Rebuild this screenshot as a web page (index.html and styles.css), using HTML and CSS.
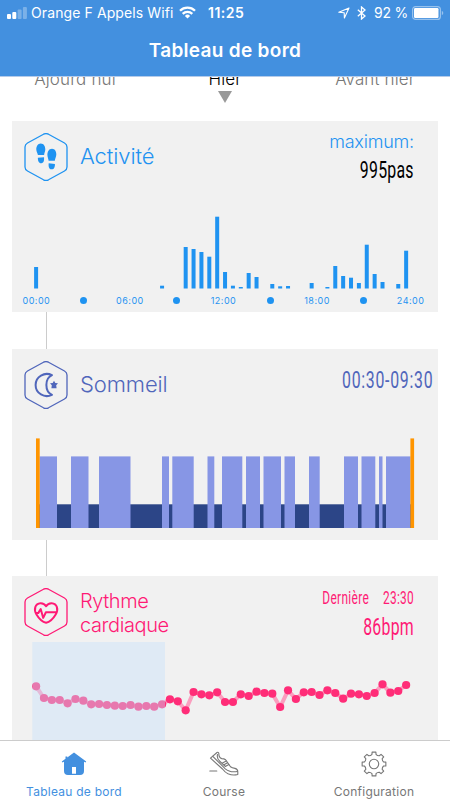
FILE: index.html
```html
<!DOCTYPE html>
<html lang="fr">
<head>
  <meta charset="UTF-8">
  <meta name="viewport" content="width=device-width, initial-scale=1.0">
  <title>Tableau de bord</title>
  <link rel="stylesheet" href="styles.css">
</head>
<body>
  <div class="app">
    <header class="header">
      <div class="status">
        <svg class="signal" width="20" height="12" viewBox="0 0 20 12" fill="#fff">
          <rect x="0" y="7" width="4" height="5" rx="1"/>
          <rect x="5.3" y="5" width="4" height="7" rx="1"/>
          <rect x="10.6" y="2.5" width="4" height="9.5" rx="1" opacity=".3"/>
          <rect x="15.9" y="0" width="4" height="12" rx="1" opacity=".3"/>
        </svg>
        <span class="carrier">Orange F Appels Wifi</span>
        <svg class="wifi" width="17" height="13" viewBox="0 0 17 13" fill="none" stroke="#fff" stroke-width="2.3">
          <path d="M1 4.7a10.600 10.600 0 0 1 15 0"/>
          <path d="M3.700 7.900a6.800 6.800 0 0 1 9.600 0"/>
          <path d="M8.500 12.500 5.900 9.900a3.700 3.700 0 0 1 5.200 0z" fill="#fff" stroke="none"/>
        </svg>
        <span class="time">11:25</span>
        <svg class="locate" width="12" height="12" viewBox="0 0 12 12" fill="none" stroke="#fff" stroke-width="1.1" stroke-linejoin="round">
          <path d="M11 1 .8 5.300l5.400.5.200 5.200z"/>
        </svg>
        <svg class="bluetooth" width="9" height="14" viewBox="0 0 9 14" fill="none" stroke="#fff" stroke-width="1.3">
          <path d="M.8 3.800 8 10l-3.500 3V1L8 4 .8 10.200"/>
        </svg>
        <span class="percent">92 %</span>
        <svg class="battery" width="32" height="14" viewBox="0 0 32 14">
          <rect x=".6" y=".6" width="27.8" height="12.800" rx="3" fill="none" stroke="#fff" stroke-opacity=".45" stroke-width="1.2"/>
          <rect x="2" y="2" width="24.5" height="10" rx="1.2" fill="#fff"/>
          <path d="M29.800 4.800c2 .8 2 3.600 0 4.400z" fill="#fff" opacity=".45"/>
        </svg>
      </div>
      <h1 class="title">Tableau de bord</h1>
    </header>

    <main class="content">
      <nav class="days">
        <span class="day">Ajourd'hui</span>
        <span class="day active">Hier</span>
        <span class="day">Avant hier</span>
      </nav>

      <section class="card activity">
        <div class="card-head">
          <svg class="badge" width="44" height="48" viewBox="0 0 44 48">
            <path class="hexagon" d="M19.500 1.200q2.500-1.300 5 0L40.500 10q2.500 1.400 2.500 4v20q0 2.600-2.500 4l-16 8.800q-2.500 1.300-5 0L3.500 38Q1 36.600 1 34V14q0-2.600 2.500-4z"/>
            <path class="solid" d="M16.700 10.400c3.200 0 4.700 3 4.600 6.200-.1 2-1 3.600-1.200 5.400h-6.200c-.2-1.800-1.600-3.400-1.600-5.600 0-3.200 1.600-6 4.400-6z"/>
            <path class="solid" d="M13.900 24.800 20 24.300c.3 2.500 0 5.700-2.700 6-2.600.1-3.600-2.700-3.400-5.500z"/>
            <path class="solid" d="M28 15.800c3 0 4.400 2.900 4.300 5.700-.1 2.300-1.300 4-1.500 6.200h-6.200c-.2-2-1.100-3.500-1.200-5.700-.1-3.200 1.500-6.200 4.600-6.200z"/>
            <path class="solid" d="m24.700 30.200 6.200.7c.2 2.700-.8 5.600-3.500 5.400-2.700-.2-3-3.600-2.700-6.100z"/>
          </svg>
          <h2 class="card-title">Activité</h2>
          <div class="summary">
            <div class="summary-label">maximum:</div>
            <div class="summary-value narrow">995pas</div>
          </div>
        </div>
        <svg class="steps-chart" id="stepsChart" width="426" height="80" viewBox="0 0 426 80"></svg>
        <div class="axis">
          <span>00:00</span><i></i><span>06:00</span><i></i><span>12:00</span><i></i><span>18:00</span><i></i><span>24:00</span>
        </div>
      </section>

      <div class="connector"></div>

      <section class="card sleep">
        <div class="card-head">
          <svg class="badge" width="44" height="48" viewBox="0 0 44 48">
            <path class="hexagon" d="M19.500 1.200q2.500-1.300 5 0L40.500 10q2.500 1.400 2.500 4v20q0 2.600-2.500 4l-16 8.800q-2.500 1.300-5 0L3.500 38Q1 36.600 1 34V14q0-2.600 2.500-4z"/>
            <path class="line" d="M28 14.200C20.500 10.500 11.600 15.500 11.600 24S20.500 37.500 28 33.800C20.500 30.500 20.500 17.500 28 14.200z"/>
            <path class="solid" d="m30 19.700 1.300 2.200 2.700.4-1.800 2 .4 2.900h-5.200l.4-2.900-1.800-2 2.700-.4z"/>
          </svg>
          <h2 class="card-title">Sommeil</h2>
          <div class="summary">
            <div class="summary-value narrow">00:30-09:30</div>
          </div>
        </div>
        <svg class="sleep-chart" id="sleepChart" width="426" height="90" viewBox="0 0 426 90"></svg>
      </section>

      <div class="connector"></div>

      <section class="card heart">
        <div class="card-head">
          <svg class="badge" width="44" height="48" viewBox="0 0 44 48">
            <path class="hexagon" d="M19.500 1.200q2.500-1.300 5 0L40.500 10q2.500 1.400 2.500 4v20q0 2.600-2.500 4l-16 8.800q-2.500 1.300-5 0L3.500 38Q1 36.600 1 34V14q0-2.600 2.500-4z"/>
            <path class="line" d="M12.500 26.500c-3-5-1.500-11 4-11.300 2.700-.1 4.600 1.300 5.600 3 1-1.700 2.900-3.100 5.600-3 5.500.3 7 6.300 4 11.300-2.200 3.700-5.800 7.500-9.600 8.300-3.800-.8-7.400-4.600-9.600-8.300z"/>
            <path class="line" d="M12 25.100h2.200l2.500-4 2.500 8.800 2.700-5.700h10.800"/>
          </svg>
          <h2 class="card-title">Rythme<br>cardiaque</h2>
          <div class="summary">
            <div class="summary-label narrow"><span>Dernière</span><span>23:30</span></div>
            <div class="summary-value narrow">86bpm</div>
          </div>
        </div>
        <svg class="heart-chart" id="heartChart" width="426" height="99" viewBox="0 0 426 99"></svg>
      </section>
    </main>

    <nav class="tabs">
      <a class="tab active">
        <svg width="26" height="26" viewBox="0 0 26 26">
          <path fill="#4390df" fill-rule="evenodd" d="M13 1.500 25.200 10.600l-.6.800-1.600-.6V20q0 4-4 4H7q-4 0-4-4v-9.200l-1.600.6-.6-.8L4.500 7.800V5.500h1.800v1zM11 16v6.800h4V16z"/>
        </svg>
        <span>Tableau de bord</span>
      </a>
      <a class="tab">
        <svg width="30" height="26" viewBox="0 0 30 26" fill="none" stroke="#777" stroke-width="1.1" stroke-linejoin="round" stroke-linecap="round">
          <path d="M1.500 7.200 8 1.500q1.500-.7 1.800.9 0 4.300 3 5.200 2.200 0 3.800 1.200l4.900 7q1.500 1.200 4.500 1.600 2.800.8 2.800 3.500v2.600q-5 1.300-9.800-.7-3-1.500-5.500-4.800z"/>
          <path d="m3.800 5.300 12.500 12.500q4.300 3.800 12 2.700M8.500 3.500q-1 4 2.500 7l5.500 5"/>
          <path d="m13.500 12 3.700-2M15 13.700l3.500-2M16.700 15.300l3.200-1.800"/>
          <path d="M.8 20h7"/>
        </svg>
        <span>Course</span>
      </a>
      <a class="tab">
        <svg width="26" height="26" viewBox="0 0 26 26" fill="none" stroke="#777" stroke-width="1.1" stroke-linejoin="round">
          <path id="gear"/>
          <circle cx="13" cy="13" r="4.7"/>
        </svg>
        <span>Configuration</span>
      </a>
    </nav>
  </div>

  <script src="charts.js"></script>
</body>
</html>
```
FILE: styles.css
```css
* {
  box-sizing: border-box;
}
body {
  margin: 0;
  background: #fff;
  font-family: Inter, "Liberation Sans", sans-serif;
}
h1, h2 {
  margin: 0;
}
svg {
  display: block;
  flex-shrink: 0;
}
.app {
  width: 450px;
  height: 800px;
  display: flex;
  flex-direction: column;
  overflow: hidden;
}

/* header */
.header {
  height: 77px;
  flex-shrink: 0;
  background: #4390df;
  border-bottom: 1px solid #b4cbea;
  color: #fff;
}
.status {
  height: 25px;
  padding: 0 6px 0 7px;
  display: flex;
  align-items: center;
  font-size: 14px;
  white-space: nowrap;
}
.signal {
  margin-right: 4px;
}
.carrier {
  width: 143px;
  letter-spacing: 0.1px;
}
.wifi {
  margin-left: 5px;
}
.time {
  margin-left: 12px;
  font-weight: 600;
  letter-spacing: 0.5px;
}
.locate {
  margin-left: auto;
  margin-right: 7px;
}
.bluetooth {
  margin-right: 8px;
}
.percent {
  width: 33px;
  margin-right: 5px;
  letter-spacing: -0.2px;
}
.title {
  height: 50px;
  line-height: 51px;
  font-size: 19px;
  font-weight: 600;
  text-align: center;
  letter-spacing: 0.3px;
}

/* content */
.content {
  height: 663px;
  padding: 0 12px;
  overflow: hidden;
}
.days {
  height: 44px;
  margin: 0 -12px;
  display: grid;
  grid-template-columns: repeat(3, 150px);
  overflow: hidden;
}
.day {
  margin-top: -9px;
  line-height: 23px;
  font-size: 17px;
  font-weight: 300;
  text-align: center;
  letter-spacing: 0.1px;
  color: #777;
}
.day.active {
  color: #000;
}
.day.active::after {
  content: "";
  display: block;
  width: 0;
  margin: 0 auto;
  border: 7px solid transparent;
  border-top: 12px solid #999;
  border-bottom: 0;
}
.card {
  height: 191px;
  background: #f1f1f1;
}
.card-head {
  height: 72px;
  padding: 12px 24px 0 12px;
  display: flex;
}
.card-title {
  height: 48px;
  margin-top: -1px;
  margin-left: 12px;
  display: flex;
  align-items: center;
  font-size: 22px;
  font-weight: 300;
  letter-spacing: -0.1px;
}
.summary {
  margin-left: auto;
  display: flex;
  flex-direction: column;
  align-items: flex-end;
  white-space: nowrap;
}
.narrow {
  font-family: Roboto, "Liberation Sans", sans-serif;
  transform: scaleX(0.66);
  transform-origin: right;
}
.hexagon {
  fill: none;
  stroke: currentColor;
  stroke-width: 1.3;
}
.solid {
  fill: currentColor;
}
.line {
  fill: none;
  stroke: currentColor;
  stroke-width: 2;
  stroke-linejoin: round;
}
.connector {
  width: 1px;
  height: 37px;
  margin-left: 34px;
  background: #ccc;
}

.activity {
  color: #1f93f1;
}
.activity .summary-label {
  margin-top: -2px;
  line-height: 22px;
  font-size: 18px;
  font-weight: 300;
  letter-spacing: -0.2px;
}
.activity .summary-value {
  margin-top: 3px;
  line-height: 28px;
  font-size: 24px;
  letter-spacing: 0.4px;
  color: #000;
}
.steps-chart {
  margin-top: 16px;
}
.axis {
  width: 421px;
  height: 23px;
  margin-left: 1px;
  display: grid;
  grid-template-columns: repeat(9, 1fr);
  align-items: center;
  justify-items: center;
  font-size: 9px;
  letter-spacing: 0.5px;
}
.axis i {
  width: 7px;
  height: 7px;
  border-radius: 50%;
  background: #1f93f1;
}

.sleep {
  color: #5066bb;
}
.sleep .card-head {
  padding-right: 6px;
}
.sleep .summary-value {
  margin-top: 5px;
  line-height: 28px;
  font-size: 24px;
  letter-spacing: 1.1px;
  margin-right: -1px;
}
.sleep-chart {
  margin-top: 17px;
}
.sleep + .connector {
  height: 36px;
}

.heart {
  color: #ff1a75;
}
.heart .card-head {
  height: 66px;
}
.heart .card-title {
  margin-top: 1px;
  font-size: 20px;
  line-height: 24px;
  letter-spacing: -0.4px;
}
.heart .summary-label {
  display: flex;
  gap: 21px;
  line-height: 20px;
  font-size: 18px;
  letter-spacing: 0.5px;
}
.heart .summary-value {
  margin-top: 5px;
  line-height: 28px;
  font-size: 24px;
  letter-spacing: 0.4px;
}

/* tab bar */
.tabs {
  height: 60px;
  flex-shrink: 0;
  margin-left: -1px;
  display: grid;
  grid-template-columns: repeat(3, 150px);
  border-top: 1px solid #ccc;
}
.tab {
  padding-top: 10px;
  display: flex;
  flex-direction: column;
  align-items: center;
  font-size: 12px;
  letter-spacing: 0.25px;
  color: #777;
}
.tab span {
  margin-top: 7px;
  line-height: 16px;
}
.tab.active {
  color: #4390df;
}
```
FILE: charts.js
```js
const SVG_NS = 'http://www.w3.org/2000/svg';
const STEP = 7.873; // one half hour
const START = 24.1;

function add(parent, tag, attrs) {
  const node = document.createElementNS(SVG_NS, tag);
  for (const key in attrs) {
    node.setAttribute(key, attrs[key]);
  }
  parent.appendChild(node);
}

// steps: half hour slot -> bar height
const steps = {
  0: 21.5, 16: 2.8, 19: 41.5, 20: 39.5, 21: 36.5, 22: 31.8, 23: 71.8,
  24: 16.5, 25: 2.8, 26: 1.5, 27: 15.5, 28: 11.5, 30: 4.5, 31: 2.2, 32: 2.5,
  35: 5.5, 37: 1.5, 38: 22.5, 39: 12.5, 40: 10.8, 41: 5.5, 42: 43.8,
  43: 14.5, 44: 6.5, 46: 4.5, 47: 37.8
};
const stepsChart = document.getElementById('stepsChart');
for (const slot in steps) {
  add(stepsChart, 'rect', {
    x: START + slot * STEP - 2, y: 79.5 - steps[slot],
    width: 4, height: steps[slot], fill: '#1f93f1'
  });
}

// light sleep periods, deep sleep lies between them
const lightSleep = [
  [27.5, 45], [59, 76.5], [87, 118.5], [150, 157], [160.3, 181.7],
  [195.5, 202.3], [210, 230.3], [234, 248], [251.5, 269], [272.5, 283],
  [297, 307.7], [332, 346], [349.5, 363.3], [367, 370.5], [374, 398.5]
];
const sleepChart = document.getElementById('sleepChart');
add(sleepChart, 'rect', { x: 27, y: 66.3, width: 372, height: 23.7, fill: '#2c4587' });
lightSleep.forEach(([from, to]) => {
  add(sleepChart, 'rect', { x: from, y: 18.4, width: to - from, height: 71.6, fill: '#8796e5' });
});
add(sleepChart, 'rect', { x: 24, y: 0.4, width: 3.7, height: 89.6, fill: '#ff9500' });
add(sleepChart, 'rect', { x: 398.4, y: 0.4, width: 3.7, height: 89.6, fill: '#ff9500' });

// heart rate, y of every measure
const pulse = [
  44.3, 56, 58, 58, 61.3, 57, 58.7, 62.3, 62, 63, 63.7, 64, 63, 64.7, 64, 64.7,
  62.3, 57.3, 59.3, 68.3, 50, 52.3, 53.3, 50.3, 60, 60, 52.3, 54, 49.7, 51,
  51.7, 65, 48.3, 57, 50.3, 50, 53, 48.3, 51, 56.7, 51.7, 52.3, 54, 51, 42.3,
  50.7, 49, 43
];
const heartChart = document.getElementById('heartChart');
add(heartChart, 'polyline', {
  points: pulse.map((y, i) => `${START + i * STEP},${y}`).join(' '),
  fill: 'none', stroke: '#fa9fbf', 'stroke-width': 4
});
pulse.forEach((y, i) => {
  add(heartChart, 'circle', { cx: START + i * STEP, cy: y, r: 4.1, fill: '#ff2d78' });
});
add(heartChart, 'rect', { x: 20.3, y: 0, width: 132.7, height: 99, fill: '#c6dffa', opacity: 0.42 });

// gear outline: eight teeth with rounded gaps between them
let outline = '';
for (let i = 0; i < 8; i++) {
  const [a, b, c, d] = [[-12, 9.8], [-9, 12], [9, 12], [12, 9.8]].map(([offset, r]) => {
    const angle = (i * 45 + offset) * Math.PI / 180;
    return `${(13 + r * Math.sin(angle)).toFixed(2)} ${(13 - r * Math.cos(angle)).toFixed(2)}`;
  });
  outline += (i ? `A4 4 0 0 0 ${a}` : `M${a}`) + `L${b}L${c}L${d}`;
  if (i === 7) {
    const angle = -12 * Math.PI / 180;
    outline += `A4 4 0 0 0 ${13 + 9.8 * Math.sin(angle)} ${13 - 9.8 * Math.cos(angle)}z`;
  }
}
document.getElementById('gear').setAttribute('d', outline);
```
